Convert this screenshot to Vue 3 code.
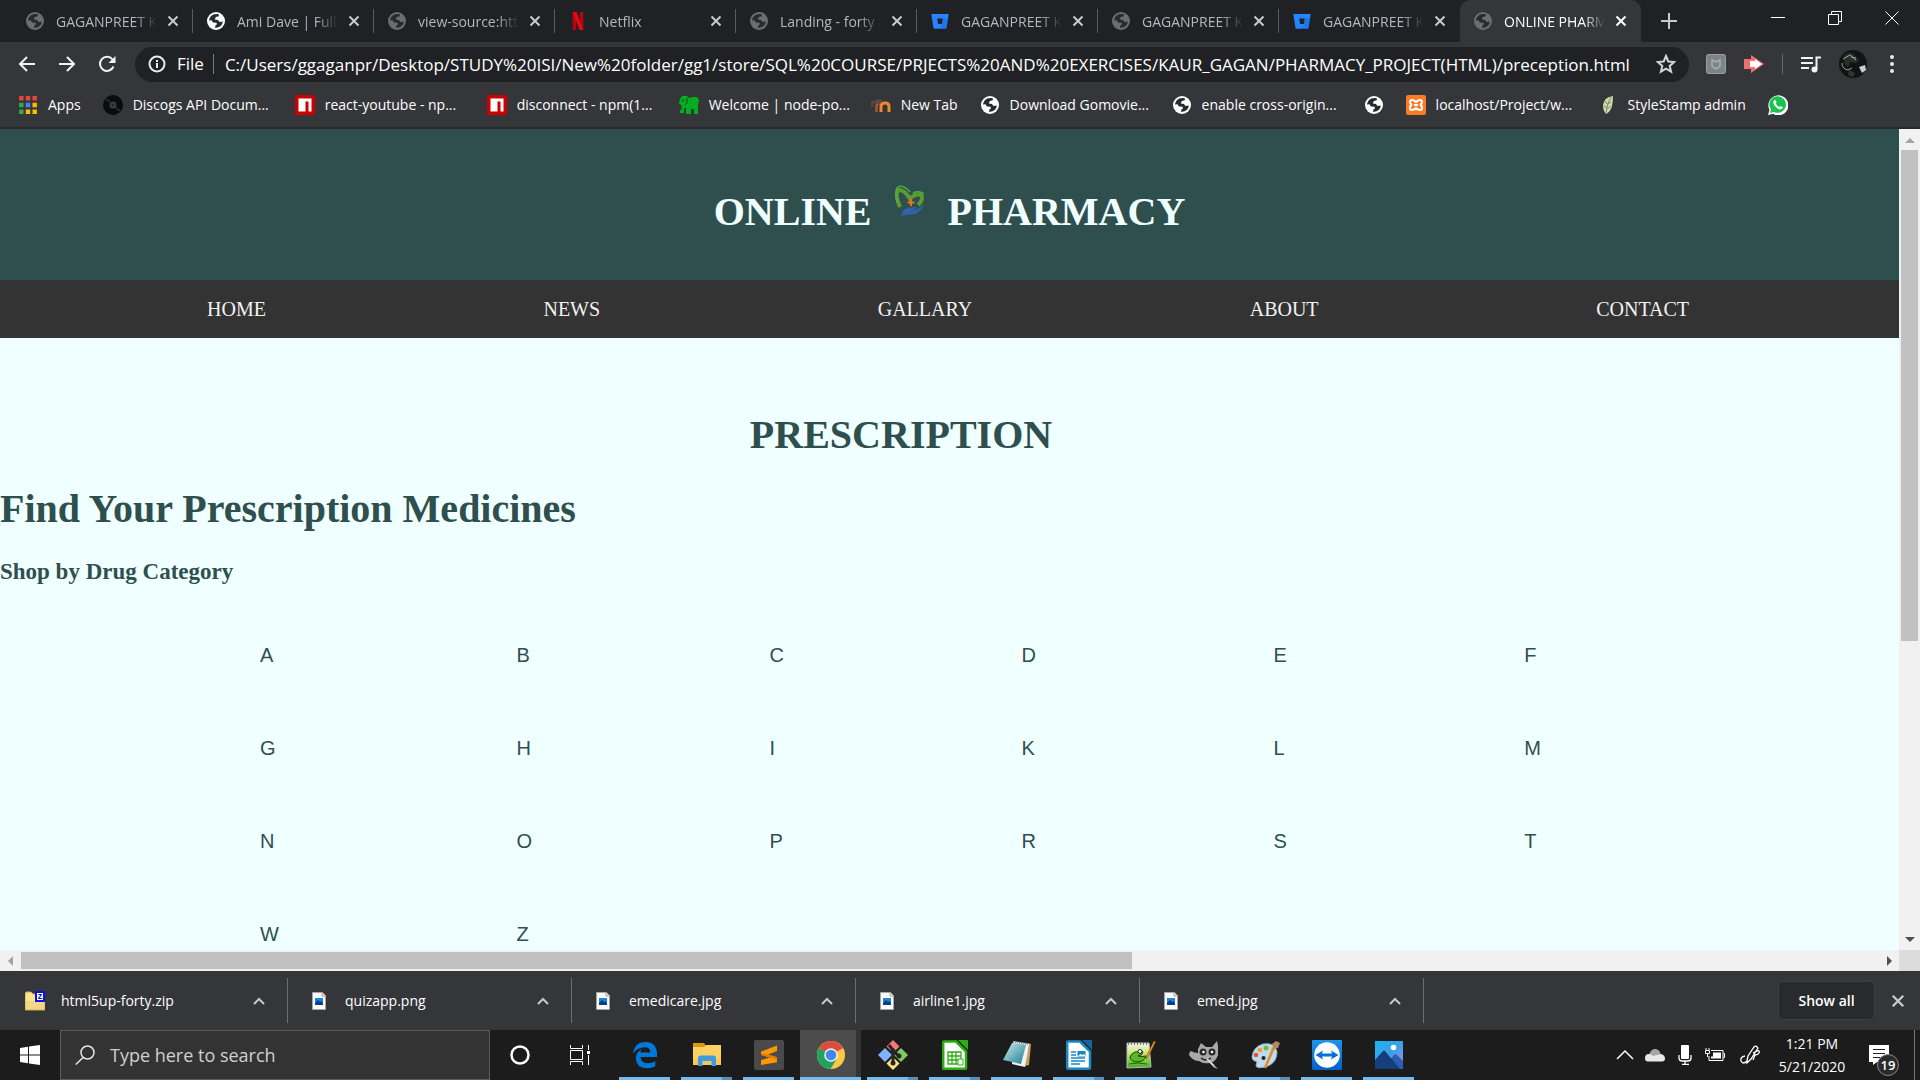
<script setup>
const tabs = [
  { icon: 'globe', title: 'GAGANPREET KAUR' },
  { icon: 'globe', title: 'Ami Dave | Full-Stack', bright: true },
  { icon: 'globe', title: 'view-source:https://' },
  { icon: 'netflix', title: 'Netflix' },
  { icon: 'globe', title: 'Landing - forty by' },
  { icon: 'bitbucket', title: 'GAGANPREET KAUR' },
  { icon: 'globe', title: 'GAGANPREET KAUR' },
  { icon: 'bitbucket', title: 'GAGANPREET KAUR' },
  { icon: 'globe', title: 'ONLINE PHARMACY', active: true },
]
const bookmarks = [
  { icon: 'apps', title: 'Apps' },
  { icon: 'discogs', title: 'Discogs API Docum...', long: true },
  { icon: 'npm', title: 'react-youtube - np...', long: true },
  { icon: 'npm', title: 'disconnect - npm(1...', long: true },
  { icon: 'elephant', title: 'Welcome | node-po...', long: true },
  { icon: 'moodle', title: 'New Tab' },
  { icon: 'globe', title: 'Download Gomovie...', long: true },
  { icon: 'globe', title: 'enable cross-origin...', long: true },
  { icon: 'globe', title: '' },
  { icon: 'xampp', title: 'localhost/Project/w...', long: true },
  { icon: 'leaf', title: 'StyleStamp admin' },
  { icon: 'whatsapp', title: '' },
]
const menu = ['HOME', 'NEWS', 'GALLARY', 'ABOUT', 'CONTACT']
const letters = 'ABCDEFGHIKLMNOPRSTWZ'.split('')
const downloads = [
  { icon: 'zip', name: 'html5up-forty.zip' },
  { icon: 'image', name: 'quizapp.png' },
  { icon: 'image', name: 'emedicare.jpg' },
  { icon: 'image', name: 'airline1.jpg' },
  { icon: 'image', name: 'emed.jpg' },
]
const apps = [
  { icon: 'edge' },
  { icon: 'explorer', stacked: true },
  { icon: 'sublime' },
  { icon: 'chrome', active: true },
  { icon: 'git', stacked: true },
  { icon: 'calc', stacked: true },
  { icon: 'notepad' },
  { icon: 'writer', stacked: true },
  { icon: 'npp' },
  { icon: 'gimp' },
  { icon: 'paint', stacked: true },
  { icon: 'teamviewer' },
  { icon: 'photos' },
]
const address =
  'C:/Users/ggaganpr/Desktop/STUDY%20ISI/New%20folder/gg1/store/SQL%20COURSE/PRJECTS%20AND%20EXERCISES/KAUR_GAGAN/PHARMACY_PROJECT(HTML)/preception.html'
</script>

<template>
  <div class="screen">
    <svg class="sprite" aria-hidden="true">
      <defs>
        <linearGradient id="g-photo" x1="0" y1="0" x2="1" y2="1">
          <stop offset="0" stop-color="#1fb4f0" /><stop offset=".5" stop-color="#3a9fe8" /><stop offset="1" stop-color="#b28be6" />
        </linearGradient>
        <linearGradient id="g-note" x1="0" y1="0" x2="1" y2="1">
          <stop offset="0" stop-color="#d4eef2" /><stop offset=".6" stop-color="#5fa9b8" /><stop offset="1" stop-color="#2b7f93" />
        </linearGradient>
        <linearGradient id="g-npp" x1="0" y1="0" x2="0" y2="1">
          <stop offset="0" stop-color="#f3f6ee" /><stop offset=".4" stop-color="#c9e67a" /><stop offset="1" stop-color="#3fae1c" />
        </linearGradient>
        <linearGradient id="g-tv" x1="0" y1="0" x2="0" y2="1">
          <stop offset="0" stop-color="#1d95ea" /><stop offset="1" stop-color="#0560c9" />
        </linearGradient>
      </defs>
      <symbol id="i-globe" viewBox="0 0 18 18">
        <circle cx="9" cy="9" r="9" fill="currentColor" />
        <path class="sea" d="M2 8.500Q2.500 4 7 2.300L11.500 2 12 4.200 8.800 5 7.800 7.500 11 8 12.500 10 15.800 9.500Q15.500 13.500 11.500 15.300L8 16 8.500 13.300 10 12.200 9.500 10.800 6 10.500 4.500 8.300Z" />
      </symbol>
      <symbol id="i-netflix" viewBox="0 0 18 20">
        <path fill="#b1060f" d="M3 0h4v20l-4 .2zM11 0h4v20h-4z" /><path fill="#e50914" d="M3 0h4.300L15 20h-4.200z" />
      </symbol>
      <symbol id="i-bitbucket" viewBox="0 0 18 18">
        <path fill="#2684ff" d="M1 2h16q.8 0 .6.800L15.500 16q-.1.800-1 .8h-11q-.8 0-1-.8L.4 2.800Q.2 2 1 2z" /><path fill="#202124" d="M6.300 6.500h5.400L11 12H7z" />
        <path fill="#1763d0" d="M12 6.500h5l-1.500 9.500q-.2.800-1 .8h-6l3-4.800z" opacity=".45" />
      </symbol>
      <symbol id="i-apps" viewBox="0 0 18 18">
        <path fill="#e8453c" d="M1 1h4v4H1zM7 1h4v4H7zM13 1h4v4h-4z" /><path fill="#34a853" d="M1 7h4v4H1zM1 13h4v4H1z" />
        <path fill="#4285f4" d="M7 7h4v4H7z" /><path fill="#fbbc05" d="M13 7h4v4h-4zM7 13h4v4H7zM13 13h4v4h-4z" />
      </symbol>
      <symbol id="i-discogs" viewBox="0 0 20 20">
        <circle cx="10" cy="10" r="10" fill="#0a0b0c" /><circle cx="10" cy="10" r="3.500" fill="#3c3d41" /><circle cx="10" cy="10" r="1.300" fill="#202124" />
        <path d="M3 4l4 3M17 16l-4-3" stroke="#35363a" stroke-width="1.500" fill="none" />
      </symbol>
      <symbol id="i-npm" viewBox="0 0 20 20">
        <path fill="#cb0000" d="M0 0h20v20H0z" /><path fill="#fff" d="M3.500 3.500h13v13h-3v-10h-3v10h-7z" />
      </symbol>
      <symbol id="i-elephant" viewBox="0 0 20 20">
        <path fill="#00b020" d="M3 1h5l2 2 4-1h4l2 3-1 5v9h-4v-5h-3v5H7v-6H5v5H1v-3h1.500v-5L0 9l1-5z" /><circle cx="4" cy="5.500" r="1" fill="#35363a" />
        <path d="M8 3v5l-2 2" stroke="#35363a" fill="none" />
      </symbol>
      <symbol id="i-moodle" viewBox="0 0 20 20">
        <path d="M5.500 17v-5.500Q5.500 8.500 8.500 8.500" fill="none" stroke="#9c5a2b" stroke-width="2.600" /><path d="M10 17v-5.500q0-3.500 4-3.500t4 3.500V17" fill="none" stroke="#f0862d" stroke-width="3" />
        <path d="M0 7l8-3 4 2-4 2.500H3z" fill="#554b47" /><path d="M1 7v5" stroke="#8a5a3d" />
      </symbol>
      <symbol id="i-xampp" viewBox="0 0 20 20">
        <rect width="20" height="20" rx="2" fill="#fb7a24" />
        <path d="M6 5q-2 0-2 2t2 3q-2 0-2 2.500t2 2.500 4-2q2 2 4 2t2-2.500-2-2.500q2-1 2-3t-2-2q-2 0-4 2-2-2-4-2zM8 10h4" fill="none" stroke="#fff" stroke-width="2" />
      </symbol>
      <symbol id="i-leaf" viewBox="0 0 20 20">
        <path d="M15 1q-9 1-10 9 0 6 3 9 5-3 6-8 1-5 1-10z" fill="#cdd9ae" /><path d="M13 2Q9 8 8 18M7 6l2 3M6 11l3 2M13 7l-3 2M13 11l-4 3" stroke="#7d8d60" fill="none" />
      </symbol>
      <symbol id="i-whatsapp" viewBox="0 0 20 20">
        <path d="M0 20l1.500-5A10 10 0 1 1 5 18.800z" fill="#fff" /><path d="M2 18l1-3.500A8.300 8.300 0 1 1 6 17z" fill="#18c44c" />
        <path d="M6 5.500q1-1 1.800 0l.8 1.800-.8 1.200q1.200 2.500 3.500 3.500l1.200-1 2 1q.5.700-.5 1.800-1.500 1.200-4.500-.3Q6.500 11.500 5.500 8.500 5 6.500 6 5.500z" fill="#fff" />
      </symbol>
      <symbol id="i-close" viewBox="0 0 12 12"><path d="M1.500 1.500l9 9M10.500 1.500l-9 9" fill="none" stroke="currentColor" stroke-width="2" /></symbol>
      <symbol id="i-chevron" viewBox="0 0 14 10"><path d="M2 8l5-5 5 5" fill="none" stroke="currentColor" stroke-width="2" /></symbol>
      <symbol id="i-zip" viewBox="0 0 20 20">
        <path d="M0 3l1-2h5l2 2h12v16H0z" fill="#f8e58c" stroke="#c9a94b" /><path d="M1 10h18v8H1z" fill="#f3c887" opacity=".6" />
        <rect x="11" y="1" width="8" height="9" fill="#fff" stroke="#0a12e0" stroke-width="2" />
        <text x="15" y="8" font-size="9" font-weight="700" text-anchor="middle" fill="#0a12e0" font-family="Liberation Sans, sans-serif">z</text>
      </symbol>
      <symbol id="i-image" viewBox="0 0 20 20">
        <path d="M3.500 1.500h10l3 3v14h-13z" fill="#fbfbfb" stroke="#a5a5a5" /><path d="M13 1.500v3.500h3.500" fill="#ddd" stroke="#a5a5a5" />
        <path d="M6 7h8v7H6z" fill="#1d86d8" /><path d="M6 14v-2l3-3 2 2 1-1 2 2v2z" fill="#0b3f86" />
      </symbol>
      <symbol id="i-edge" viewBox="0 0 30 30">
        <path fill="#0078d7" d="M3 13.500Q4.500 2 15.500 2 27 2.200 27 14.500V17H10.500q.5 6.300 7.500 6.300 4 0 7.300-2v5Q22 28.200 17 28.200 6 28 5.800 18 5.800 12.500 11.500 9 10.500 10.500 10.400 12.500h9.800Q20.200 7.300 14.800 7.300 8 7.300 3 13.500z" />
      </symbol>
      <symbol id="i-explorer" viewBox="0 0 30 30">
        <path fill="#d99a12" d="M1 3h11l2 3v4H1z" /><path fill="#fdd063" d="M1 7h11l2-2h15v20H1z" /><path fill="#f4bf4a" d="M1 19h28v6H1z" opacity=".5" />
        <path fill="#3f9be0" d="M6 26V18q0-2.500 2.500-2.500h13Q24 15.500 24 18v8h-4.500v-5h-9v5z" />
      </symbol>
      <symbol id="i-sublime" viewBox="0 0 30 30">
        <rect width="30" height="30" rx="2" fill="#4a4a4a" /><path fill="#ff9800" d="M7 11.500L23 5.500v5.500l-9 3.500 9 2.800v5L7 25v-5l9-2.500-9-2.500z" /><path fill="#e27e00" d="M14 14.500l9 2.800v2.700L7 14.800v-1.500z" />
      </symbol>
      <symbol id="i-chrome" viewBox="0 0 30 30">
        <circle cx="15" cy="15" r="14" fill="#fdc943" /><path d="M15 15L2.900 8A14 14 0 0 1 27.100 8z" fill="#da4c3e" />
        <path d="M2.900 8A14 14 0 0 0 14.500 29L21 18.500 15 15z" fill="#1ea362" /><circle cx="15" cy="15" r="6.800" fill="#f1f1f1" /><circle cx="15" cy="15" r="5.300" fill="#4585f0" />
      </symbol>
      <symbol id="i-git" viewBox="0 0 30 30">
        <path d="M15 0l6.500 6.500L15 13 8.500 6.500z" fill="#f37978" /><path d="M7 8l7 7-7 7-7-7z" fill="#80b3ff" /><path d="M23 8l7 7-7 7-7-7z" fill="#80ca60" /><path d="M15 17l6.500 6.500L15 30l-6.500-6.500z" fill="#ffe27a" />
        <path d="M11 5l4 5v12M15 11l6 5" stroke="#262626" stroke-width="3" fill="none" /><circle cx="15" cy="11" r="2.500" fill="#262626" /><circle cx="21" cy="16" r="2.500" fill="#262626" /><circle cx="15" cy="23" r="2.500" fill="#262626" />
      </symbol>
      <symbol id="i-calc" viewBox="0 0 30 30">
        <path d="M4 1.500h12l10 10V28q0 .8-.8.8H4q-.8 0-.8-.8V2.300q0-.8.800-.8z" fill="#fff" stroke="#2cae12" stroke-width="2.500" /><path d="M18 0h10v10z" fill="#2cae12" />
        <path d="M8 12h13v12H8zM8 16h13M8 20h13M12 12v12M16 12v12" fill="none" stroke="#2cae12" stroke-width="1.300" /><path d="M18 19h5v6h-5z" fill="#fff" stroke="#2cae12" />
      </symbol>
      <symbol id="i-notepad" viewBox="0 0 30 30">
        <path d="M25 3l4 1-2 21-4 1z" fill="#c89e5b" /><path d="M11 1l16 3-4 23-13-3z" fill="#eef4f5" /><path d="M10 3l14 2-5 19L1 20z" fill="url(#g-note)" /><path d="M11 2l15 2" stroke="#8b8b8b" stroke-width="2" stroke-dasharray="1 1" />
      </symbol>
      <symbol id="i-writer" viewBox="0 0 30 30">
        <path d="M4 1.500h12l10 10V28q0 .8-.8.8H4q-.8 0-.8-.8V2.300q0-.8.800-.8z" fill="#fff" stroke="#1a87c4" stroke-width="2.500" /><path d="M18 0h10v10z" fill="#12669b" />
        <path d="M7 12h5M7 15h5M7 18h14M7 21h14M7 24h9" stroke="#1a87c4" stroke-width="1.500" /><path d="M13.500 11h8v5.500h-8z" fill="#1a87c4" /><path d="M14 16l2.500-2 2 1 1.500-1 1.500 2z" fill="#fff" />
      </symbol>
      <symbol id="i-npp" viewBox="0 0 30 30">
        <path d="M1 3h22l2 24-24 1z" fill="url(#g-npp)" stroke="#b9b9b9" /><path d="M2 4h20" stroke="#777" stroke-width="2" stroke-dasharray="1 2" />
        <path d="M4 17q3-6 8-5 2-3 5 0-1 4-5 4 4 1 8 0-2 6-9 6-6 0-7-5z" fill="#57b82a" stroke="#23400e" /><circle cx="14" cy="11.500" r="2" fill="#fff" stroke="#222" />
        <path d="M28 1l1.500 1L22 17l-2 2 .5-3z" fill="#f2a51f" stroke="#7c3f0c" stroke-width=".6" /><path d="M3 24q9-2 18 0" stroke="#1c6d08" fill="none" />
      </symbol>
      <symbol id="i-gimp" viewBox="0 0 30 30">
        <path d="M10 9l3-6 5 4h6l5-6q2 8 1 14-2 7-9 8-6 1-10-2-6 0-10-6 0-3 2-4 3 2 7 2z" fill="#a9a9a9" /><circle cx="15" cy="12" r="3.500" fill="#2b2b2b" /><circle cx="24" cy="12" r="3.500" fill="#2b2b2b" />
        <circle cx="15.500" cy="12" r="1.300" fill="#fff" /><circle cx="24" cy="12" r="1.300" fill="#fff" /><path d="M13 18q5 4 10 0" stroke="#222" fill="none" stroke-width="1.500" /><path d="M19 19l7 7" stroke="#d5d5d5" stroke-width="2" /><path d="M25 24l5 5-5-2z" fill="#bbb" />
      </symbol>
      <symbol id="i-paint" viewBox="0 0 30 30">
        <path d="M2 17Q3 7 13 4q12-2 14 8 0 10-9 14-12 4-12-1 2-4-1-4-3-1-3-4z" fill="#bfdcee" stroke="#8fb4cc" /><circle cx="13.500" cy="18" r="2" fill="#222" />
        <circle cx="6" cy="15" r="2.300" fill="#e6503c" /><circle cx="10" cy="10" r="2.300" fill="#f39a2d" /><circle cx="16" cy="8" r="2.500" fill="#6cc04a" /><circle cx="22" cy="9" r="2" fill="#f1c84b" />
        <path d="M15 28l9-21" stroke="#e08a2c" stroke-width="2.500" /><path d="M22 4l4-3 4 2-2 5-4 1z" fill="#b08762" />
      </symbol>
      <symbol id="i-teamviewer" viewBox="0 0 30 30">
        <rect width="30" height="30" rx="1" fill="url(#g-tv)" /><circle cx="15" cy="15" r="12.800" fill="#fff" /><path d="M3.500 15L11 10.500l-1 3h10l-1-3 7.500 4.500-7.500 4.500 1-3H10l1 3z" fill="#0b6fd3" />
      </symbol>
      <symbol id="i-photos" viewBox="0 0 30 30">
        <path d="M1 1h28v28H1z" fill="url(#g-photo)" /><path d="M14 22l6-7q1.500-1.500 3 0l6 6v8H14z" fill="#2d5cb4" /><path d="M1 20l8-9q1-1 2 0l15 18H1z" fill="#143f7b" /><circle cx="19.500" cy="7.500" r="2.800" fill="#fff" />
      </symbol>
    </svg>

    <nav class="tabs" aria-label="Tabs">
      <div v-for="(tab, i) in tabs" :key="i" class="tab" :class="{ active: tab.active, bright: tab.bright }">
        <svg class="favicon"><use :href="'#i-' + tab.icon" /></svg>
        <span class="tab-title">{{ tab.title }}</span>
        <button class="tab-close" aria-label="Close tab"><svg><use href="#i-close" /></svg></button>
      </div>
      <button class="new-tab" aria-label="New tab">
        <svg viewBox="0 0 16 16"><path d="M8 0v16M0 8h16" stroke="currentColor" stroke-width="2" /></svg>
      </button>
      <div class="window-buttons">
        <button aria-label="Minimize"><svg viewBox="0 0 14 14"><path d="M0 6.500h14" /></svg></button>
        <button aria-label="Restore"><svg viewBox="0 0 14 14"><path d="M.5 3.500h10v10H.5zM3.500 3V.5h10v10H11" /></svg></button>
        <button aria-label="Close"><svg viewBox="0 0 14 14"><path d="M.5.5l13 13M13.500.5l-13 13" /></svg></button>
      </div>
    </nav>

    <div class="toolbar">
      <button class="tool" aria-label="Back"><svg viewBox="0 0 18 18"><path d="M17 9H2M9 2L2 9l7 7" /></svg></button>
      <button class="tool" aria-label="Forward"><svg viewBox="0 0 18 18"><path d="M1 9h15M9 2l7 7-7 7" /></svg></button>
      <button class="tool" aria-label="Reload"><svg viewBox="0 0 18 18"><path d="M15.500 11.500A7 7 0 1 1 14.500 4.500" /><path class="solid" d="M17.500 1v7h-7z" /></svg></button>
      <div class="omnibox">
        <svg class="info" viewBox="0 0 18 18"><circle cx="9" cy="9" r="7.500" /><path d="M9 8v5M9 5v2" /></svg>
        <span class="scheme">File</span>
        <input class="address" type="text" aria-label="Address" :value="address" />
        <svg class="star" viewBox="0 0 20 20"><path d="M10 2l2.300 5.500 6 .5-4.600 3.900 1.400 5.800L10 14.600l-5.100 3.100 1.400-5.800L1.700 8l6-.5z" /></svg>
      </div>
      <div class="extensions">
        <svg class="ext" viewBox="0 0 20 20"><rect x=".5" y=".5" width="19" height="19" rx="2" fill="#7d8488" stroke="#9a9fa2" /><path d="M6 6l4 2 4-2v6l-4 3-4-3z" fill="none" stroke="#a9aeb1" stroke-width="1.500" /></svg>
        <svg class="ext" viewBox="0 0 20 20"><path d="M0 5h7V1l13 9-13 9v-4H0z" fill="#f26d6d" /><path d="M6 7h5V5l7 5-7 5v-2H6z" fill="#fff" /></svg>
        <span class="rule"></span>
        <svg class="ext" viewBox="0 0 20 20"><path d="M0 4h12M0 9h12M0 14h8M15.500 15V3.500H20" stroke="#f1f3f4" stroke-width="2" fill="none" /><circle cx="13.500" cy="15.500" r="3" fill="#f1f3f4" /></svg>
        <svg class="avatar" viewBox="0 0 28 28"><circle cx="14" cy="14" r="14" fill="#101513" /><path d="M5 6q5-6 10-1l5 5-3 3-6-1-2 6-4-5z" fill="#29302c" /><path d="M4 9l7-4 6 5M12 7l5 1M3 13q0 6 6 7l4-2" stroke="#9aa49e" fill="none" /><path d="M20 17l6-2 1 5-4 3z" fill="#c8cec9" /><path d="M10 20l6 3-2 4-5-2z" fill="#2b3a33" /></svg>
        <svg class="dots" viewBox="0 0 4 18"><circle cx="2" cy="2" r="2" /><circle cx="2" cy="9" r="2" /><circle cx="2" cy="16" r="2" /></svg>
      </div>
    </div>

    <div class="bookmarks">
      <a v-for="(mark, i) in bookmarks" :key="i" href="#" class="bookmark" :class="{ long: mark.long }" :aria-label="mark.title || mark.icon">
        <svg :class="{ world: mark.icon === 'globe' }"><use :href="'#i-' + mark.icon" /></svg>
        <span v-if="mark.title">{{ mark.title }}</span>
      </a>
    </div>

    <div class="viewport">
      <main class="page">
        <header class="banner">
          <h1>ONLINE</h1>
          <svg class="logo" viewBox="0 0 30 32">
            <path d="M5 22Q-1 8 4 5Q9 4 15 14Q20 8 26 10Q29 14 23 20" fill="none" stroke="#5f9a30" stroke-width="4" />
            <path d="M2 17Q-1 3 4 1.500Q9 0 15 7M18 8Q24 5 29 9" fill="none" stroke="#48b24c" stroke-width="1.500" />
            <path d="M16 14v7M12.500 17.500h7" stroke="#f2701d" stroke-width="2" />
            <path d="M6 31q1-6 6-8l8-1q2 0 0 2l-4 1q7 0 13-6-2 7-9 10-5 1-9 1-2 0-5 1z" fill="#2e64a3" />
          </svg>
          <h1>PHARMACY</h1>
        </header>
        <nav class="menu" aria-label="Main">
          <a v-for="item in menu" :key="item" href="#">{{ item }}</a>
        </nav>
        <h1 class="title">PRESCRIPTION</h1>
        <h1 class="heading">Find Your Prescription Medicines</h1>
        <h3 class="subheading">Shop by Drug Category</h3>
        <div class="letters">
          <a v-for="letter in letters" :key="letter" href="#">{{ letter }}</a>
        </div>
      </main>
      <div class="vbar">
        <svg class="arrow dim" viewBox="0 0 10 10"><path d="M0 8l5-5 5 5z" /></svg>
        <div class="vtrack"><div class="vthumb"></div></div>
        <svg class="arrow" viewBox="0 0 10 10"><path d="M0 3l5 5 5-5z" /></svg>
      </div>
    </div>
    <div class="hbar">
      <svg class="arrow dim" viewBox="0 0 10 10"><path d="M7 0L2 5l5 5z" /></svg>
      <div class="htrack"><div class="hthumb"></div></div>
      <svg class="arrow" viewBox="0 0 10 10"><path d="M3 0l5 5-5 5z" /></svg>
      <div class="corner"></div>
    </div>

    <div class="shelf">
      <div v-for="file in downloads" :key="file.name" class="download">
        <svg class="file"><use :href="'#i-' + file.icon" /></svg>
        <span>{{ file.name }}</span>
        <button aria-label="File menu"><svg><use href="#i-chevron" /></svg></button>
      </div>
      <button class="show-all">Show all</button>
      <button class="shelf-close" aria-label="Close downloads"><svg><use href="#i-close" /></svg></button>
    </div>

    <footer class="taskbar">
      <button class="start" aria-label="Start"><svg viewBox="0 0 20 20"><path d="M0 3l8-1.200v7.700H0zM9 1.600L20 0v9.500H9zM0 10.500h8v7.700L0 17zM9 10.500h11V20L9 18.400z" fill="#fff" /></svg></button>
      <label class="search">
        <svg viewBox="0 0 20 20"><circle cx="12.500" cy="7.500" r="6.500" /><path d="M8 12.500L.8 19.500" /></svg>
        <input type="text" aria-label="Search" placeholder="Type here to search" />
      </label>
      <button class="task" aria-label="Cortana"><svg viewBox="0 0 20 20"><circle cx="10" cy="10" r="8.500" stroke-width="2.500" /></svg></button>
      <button class="task" aria-label="Task view"><svg viewBox="0 0 20 20"><path d="M.5 0v3.500h12V0M.5 5.500h12v9H.5zM.5 20v-3.500h12V20M18.500 0v5M18.500 10v10" stroke-width="1" /><path d="M17 6h3v3h-3z" fill="#fff" stroke="none" /></svg></button>
      <div class="apps">
        <button v-for="app in apps" :key="app.icon" class="app" :class="{ active: app.active, stacked: app.stacked }" :aria-label="app.icon">
          <svg><use :href="'#i-' + app.icon" /></svg>
        </button>
      </div>
      <div class="tray">
        <svg viewBox="0 0 20 20"><path d="M2 14l8-8 8 8" fill="none" stroke="#fff" stroke-width="1.500" /></svg>
        <svg viewBox="0 0 20 20"><path d="M4 10Q6 3 11 4q4 1 4.500 5L19 11v3H2z" fill="#a5a5a5" /><path d="M0 13q0-4 4-4 2 0 4 2l8-2q4 1 4 4.500 0 3-3 3H3q-3 0-3-3.500z" fill="#e9e9e9" /></svg>
        <svg viewBox="0 0 20 20"><rect x="6" y="0" width="8" height="14" rx="1" fill="#fff" /><path d="M4 10v3q0 3 3 3h6q3 0 3-3v-3M10 16v3M7 19.500h7" fill="none" stroke="#fff" stroke-width="1.300" /></svg>
        <svg viewBox="0 0 20 20"><path d="M6 5.500h12v10H4V11M18.500 8.500h1v4h-1" fill="none" stroke="#fff" /><path d="M8 7.500h8v6H6v-2h2z" fill="#fff" /><path d="M1 3v2M4 3v2M.5 5.500h4v3h-4zM2.500 9v3" fill="none" stroke="#fff" /></svg>
        <svg class="pen" viewBox="0 0 20 20"><path d="M7 16l1-5 6-9q2-2 4 1L11 14l-4 4zM5 11q-5 1-4 5 2 4 6 0M13 8l4-2q3-1 2 2-1 2-4 2l-2 5" fill="none" stroke="#fff" stroke-width="1.300" /></svg>
      </div>
      <div class="clock"><span>1:21 PM</span><span>5/21/2020</span></div>
      <div class="notices">
        <svg viewBox="0 0 20 20"><path d="M0 0h20v17H8l-4 3v-3H0z" fill="#fff" /><path d="M4 4.500h12M4 8.500h12M4 12.500h7" stroke="#222" /></svg>
        <span class="count">19</span>
      </div>
    </footer>
  </div>
</template>

<style>
body { margin: 0; background: #202124; }
</style>

<style scoped>
* { box-sizing: border-box; }
button { border: 0; padding: 0; background: none; color: inherit; font: inherit; display: flex; align-items: center; justify-content: center; }
input { border: 0; padding: 0; background: none; color: inherit; font: inherit; outline: 0; min-width: 0; }
a { color: inherit; text-decoration: none; }
svg { display: block; flex: none; }
.sprite { position: absolute; width: 0; height: 0; }
.screen { display: flex; flex-direction: column; height: 100vh; overflow: hidden; font-family: "Open Sans", "Noto Sans", sans-serif; font-size: 14px; color: #fff; }

.tabs { display: flex; flex: none; height: 42px; padding-left: 12px; background: #202124; }
.tab { position: relative; display: flex; align-items: center; width: 181px; height: 42px; padding: 0 11px 0 14px; color: #9a9da1; border-radius: 10px 10px 0 0; }
.tab::after { content: ""; position: absolute; right: 0; top: 9px; width: 1px; height: 24px; background: #5a5c60; }
.tab:nth-child(8)::after, .tab.active::after { display: none; }
.tab.active { background: #35363a; color: #fff; }
.favicon { width: 18px; height: 18px; color: #6b6d71; }
.sea { fill: #292a2d; }
.bright .favicon { color: #fff; }
.tab-title { flex: 1; margin-left: 12px; overflow: hidden; white-space: nowrap; color: #b4b7bb; mask-image: linear-gradient(to right, #000 78%, transparent); }
.active .tab-title { color: #fff; }
.tab-close { width: 18px; height: 20px; margin-left: 7px; color: #c8cacd; }
.active .tab-close { color: #fff; }
.tab-close svg { width: 12px; height: 12px; }
.new-tab { width: 56px; color: #c8cacd; }
.new-tab svg { width: 16px; height: 16px; }
.window-buttons { display: flex; margin-left: auto; height: 36px; }
.window-buttons button { width: 57px; }
.window-buttons svg { width: 14px; height: 14px; fill: none; stroke: #fff; }

.toolbar { display: flex; flex: none; align-items: center; height: 44px; padding: 0 26px 0 7px; background: #35363a; }
.tool { width: 40px; height: 36px; }
.tool svg { width: 18px; height: 18px; fill: none; stroke: #f1f3f4; stroke-width: 2; }
.tool .solid { fill: #f1f3f4; stroke: none; }
.omnibox { display: flex; flex: 1; align-items: center; height: 35px; margin-left: 8px; padding: 0 13px; border-radius: 18px; background: #202124; font-size: 17px; }
.info { width: 18px; height: 18px; fill: none; stroke: #e8eaed; stroke-width: 2; }
.scheme { margin-left: 11px; padding-right: 9px; border-right: 1px solid #777a7e; line-height: 20px; }
.address { flex: 1; margin-left: 11px; }
.star { width: 20px; height: 20px; fill: none; stroke: #d3d5d8; stroke-width: 2; }
.extensions { display: flex; align-items: center; gap: 18px; margin-left: 17px; }
.ext { width: 20px; height: 20px; }
.rule { width: 1px; height: 20px; background: #67696d; }
.avatar { width: 28px; height: 28px; margin-right: 5px; }
.dots { width: 4px; height: 18px; fill: #e8eaed; }

.bookmarks { display: flex; flex: none; align-items: center; gap: 22px; height: 43px; padding: 0 18px 4px; background: #35363a; border-bottom: 2px solid #27282b; white-space: nowrap; }
.bookmark { display: flex; align-items: center; gap: 10px; }
.bookmark.long { width: 170px; }
.bookmark svg { width: 20px; height: 20px; }
.bookmark svg.world { width: 18px; height: 18px; margin: 0 1px; color: #fff; }

.viewport { display: flex; flex: 1; min-height: 0; }
.page { flex: 1; min-width: 0; overflow: hidden; background: #f0ffff; color: #2f4f4f; font-family: "Liberation Serif", "Times New Roman", serif; }
h1, h3 { margin: 0; }
h1 { font-size: 40px; line-height: 46px; }
.banner { display: flex; align-items: center; justify-content: center; height: 151px; padding-top: 14px; background: #2f4f4f; color: #f0ffff; }
.logo { width: 30px; height: 32px; margin: 0 23px 22px; }
.menu { display: flex; align-items: center; justify-content: space-between; height: 58px; padding: 0 210px 0 207px; background: #333; color: #f2f2f2; font-size: 20px; }
.title { margin-top: 74px; padding-right: 97px; text-align: center; }
.heading { margin-top: 28px; }
.subheading { margin-top: 27px; font-size: 23px; line-height: 26px; }
.letters { display: grid; grid-template-columns: repeat(6, auto); justify-content: space-between; row-gap: 70px; margin-top: 59px; padding: 0 358px 0 260px; font-family: "Liberation Sans", Arial, sans-serif; font-size: 20px; line-height: 23px; }

.vbar { display: flex; flex-direction: column; flex: none; align-items: center; width: 21px; padding: 6px 0; background: #f1f1f1; }
.arrow { width: 10px; height: 10px; fill: #505050; }
.arrow.dim { fill: #a3a3a3; }
.vtrack { flex: 1; width: 17px; margin: 5px 0; }
.vthumb { height: 63%; background: #c1c1c1; }
.hbar { display: flex; flex: none; align-items: center; height: 21px; padding-left: 6px; background: #f1f1f1; }
.htrack { flex: 1; margin: 0 5px; padding-right: 6px; }
.hthumb { width: 60%; height: 17px; background: #c1c1c1; }
.corner { width: 21px; height: 21px; margin-left: 5px; background: #dcdcdc; }

.shelf { display: flex; flex: none; align-items: center; height: 59px; padding: 0 15px 0 4px; background: #35363a; }
.download { display: flex; align-items: center; width: 284px; height: 45px; padding: 0 21px; border-right: 1px solid #6d6e72; }
.file { width: 20px; height: 20px; }
.download span { flex: 1; margin-left: 16px; }
.download button svg { width: 14px; height: 10px; color: #c5c7ca; }
.show-all { width: 97px; height: 39px; margin-left: auto; border: 1px solid #3e3f44; border-radius: 5px; background: #292a2d; font-weight: 600; }
.shelf-close { margin-left: 16px; color: #c8cacd; }
.shelf-close svg { width: 14px; height: 14px; }

.taskbar { display: flex; flex: none; align-items: center; height: 50px; background: #1c1c1c; }
.start { width: 60px; height: 50px; }
.start svg { width: 20px; height: 20px; }
.search { display: flex; align-items: center; width: 430px; height: 50px; padding: 0 14px; border: 1px solid #5c5c5c; background: #333; font-size: 18px; color: #d0d0d0; }
.search svg { width: 20px; height: 20px; fill: none; stroke: #e6e6e6; stroke-width: 1.5; }
.search input { flex: 1; margin-left: 15px; }
.search input::placeholder { color: #d0d0d0; opacity: 1; }
.task { width: 60px; height: 50px; }
.task svg { width: 20px; height: 20px; fill: none; stroke: #fff; }
.apps { display: flex; gap: 1px; margin-left: 4px; }
.app { position: relative; width: 61px; height: 50px; }
.app svg { width: 30px; height: 30px; }
.app::after { content: ""; position: absolute; left: 5px; right: 5px; bottom: 0; height: 3px; background: #76b9ed; }
.app.stacked::after { background: linear-gradient(to right, #76b9ed 80%, #5a8fb8 80%); }
.app.active { background: linear-gradient(to right, #4c4c4c 56px, #333 56px); }
.app.active::after { left: 0; right: 0; }
.tray { display: flex; align-items: center; gap: 10px; margin-left: auto; }
.tray svg { width: 20px; height: 20px; }
.tray .pen { margin-left: 5px; }
.clock { display: flex; flex-direction: column; align-items: center; width: 104px; line-height: 23px; }
.notices { position: relative; width: 51px; height: 50px; padding: 15px 0 0 5px; border-right: 1px solid #777; margin-right: 5px; }
.notices svg { width: 20px; height: 20px; }
.count { position: absolute; left: 13px; top: 24px; width: 22px; height: 22px; border: 1px solid #8a8a8a; border-radius: 50%; background: #2b2b2b; font-size: 13px; font-weight: 600; line-height: 20px; text-align: center; }
</style>
